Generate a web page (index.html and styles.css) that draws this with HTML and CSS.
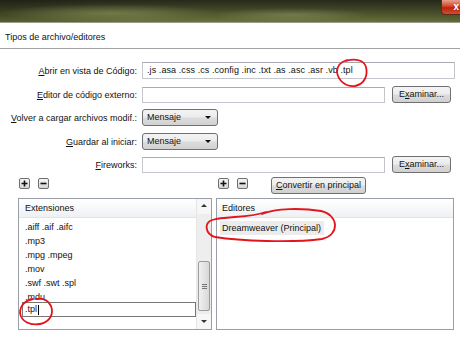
FILE: index.html
```html
<!DOCTYPE html>
<html lang="es">
<head>
    <meta charset="UTF-8">
    <meta name="viewport" content="width=device-width, initial-scale=1.0">
    <title>Tipos de archivo/editores</title>
    <link rel="stylesheet" href="styles.css">
</head>
<body>
    <div class="window">
        <!-- Barra de titulo (Aero) -->
        <div class="titlebar">
            <span class="close-btn">x</span>
        </div>

        <div class="section-title">Tipos de archivo/editores</div>

        <!-- Preferencias -->
        <div class="prefs">
            <label class="prefs-label"><u>A</u>brir en vista de Código:</label>
            <div class="textbox textbox-ext">.js .asa .css .cs .config .inc .txt .as .asc .asr .vb .tpl</div>

            <label class="prefs-label"><u>E</u>ditor de código externo:</label>
            <div class="field-row">
                <div class="textbox"></div>
                <button class="btn">E<u>x</u>aminar...</button>
            </div>

            <label class="prefs-label"><u>V</u>olver a cargar archivos modif.:</label>
            <div class="select">Mensaje<span class="arrow"></span></div>

            <label class="prefs-label"><u>G</u>uardar al iniciar:</label>
            <div class="select">Mensaje<span class="arrow"></span></div>

            <label class="prefs-label"><u>F</u>ireworks:</label>
            <div class="field-row">
                <div class="textbox"></div>
                <button class="btn">E<u>x</u>aminar...</button>
            </div>
        </div>

        <!-- Listas -->
        <div class="panels">
            <div class="panel panel-ext">
                <div class="tools">
                    <span class="mini"><svg width="11" height="11" viewBox="0 0 11 11"><path d="M2.5 5.5h6M5.5 2.5v6" stroke="#111" stroke-width="1.6"/></svg></span>
                    <span class="mini"><svg width="11" height="11" viewBox="0 0 11 11"><path d="M2.5 5.5h6" stroke="#111" stroke-width="1.6"/></svg></span>
                </div>
                <div class="listbox">
                    <div class="list-main">
                        <div class="list-header">Extensiones</div>
                        <div class="list-items">
                            <div class="item">.aiff .aif .aifc</div>
                            <div class="item">.mp3</div>
                            <div class="item">.mpg .mpeg</div>
                            <div class="item">.mov</div>
                            <div class="item">.swf .swt .spl</div>
                            <div class="item">.mdu</div>
                            <div class="item-edit">.tpl<span class="caret"></span></div>
                        </div>
                    </div>
                    <div class="scrollbar">
                        <div class="sb-arrow sb-up"></div>
                        <div class="sb-track">
                            <div class="sb-thumb"><span class="grip"></span></div>
                        </div>
                        <div class="sb-arrow sb-down"></div>
                    </div>
                </div>
            </div>

            <div class="panel panel-editors">
                <div class="tools">
                    <span class="mini"><svg width="11" height="11" viewBox="0 0 11 11"><path d="M2.5 5.5h6M5.5 2.5v6" stroke="#111" stroke-width="1.6"/></svg></span>
                    <span class="mini"><svg width="11" height="11" viewBox="0 0 11 11"><path d="M2.5 5.5h6" stroke="#111" stroke-width="1.6"/></svg></span>
                    <button class="btn btn-principal"><u>C</u>onvertir en principal</button>
                </div>
                <div class="listbox">
                    <div class="list-main">
                        <div class="list-header">Editores</div>
                        <div class="list-items">
                            <span class="item-selected">Dreamweaver (Principal)</span>
                        </div>
                    </div>
                </div>
            </div>
        </div>

        <!-- Marcas rojas a mano -->
        <svg class="marks" width="460" height="337" viewBox="0 0 460 337">
            <path d="M346 61 C355 58, 364 60, 366 67 C368 75, 365 84, 355 86 C345 87, 338 80, 337 72 C337 66, 340 62, 347 60" />
            <path d="M262 214 C276 208, 302 208, 321 211 C339 215, 340 235, 322 239 C292 243, 240 241, 215 237 C205 234, 204 223, 212 220 C226 216, 250 218, 266 212" />
            <path d="M33 299 C26 300, 20 305, 20 313 C21 321, 30 326, 40 324 C50 322, 54 314, 51 306 C48 300, 42 298, 36 299" />
        </svg>
    </div>
</body>
</html>
```

FILE: styles.css
```css
body {
    margin: 0;
    padding: 0;
    background: #fff;
    font-family: 'Liberation Sans', Arial, sans-serif;
    font-size: 9px;
    color: #111;
}

.window {
    position: relative;
    width: 460px;
    height: 337px;
    overflow: hidden;
    background: #fff;
}

/* Barra de titulo */
.titlebar {
    height: 22px;
    border-bottom: 1px solid #9a9d8c;
    display: flex;
    justify-content: flex-end;
    align-items: flex-start;
    background:
        radial-gradient(ellipse 110px 9px at 110px 13px, rgba(160, 170, 110, 0.45), transparent),
        radial-gradient(ellipse 80px 7px at 290px 15px, rgba(175, 180, 140, 0.35), transparent),
        linear-gradient(to right, rgba(0, 0, 0, 0.2), rgba(0, 0, 0, 0) 30%, rgba(0, 0, 0, 0) 70%, rgba(30, 30, 20, 0.1)),
        linear-gradient(to bottom, #262919 0%, #3c4125 35%, #535c2d 70%, #6a743f 100%);
}

.close-btn {
    width: 19px;
    height: 15px;
    box-sizing: border-box;
    border: 1px solid #5b2a1e;
    border-top: none;
    border-right: none;
    border-radius: 0 0 0 4px;
    background: linear-gradient(to bottom, #e8a08a 0%, #d2462c 45%, #b5250f 55%, #d0502a 100%);
    color: #fff;
    font-weight: bold;
    font-size: 10px;
    line-height: 13px;
    text-align: right;
    padding-right: 1px;
}

.section-title {
    height: 25px;
    line-height: 29px;
    padding-left: 5px;
    border-bottom: 1px solid #a3a3a3;
}

/* Formulario */
.prefs {
    display: grid;
    grid-template-columns: 137px 313px;
    grid-auto-rows: 18px;
    column-gap: 5px;
    row-gap: 5.5px;
    margin-top: 13px;
}

.prefs-label {
    text-align: right;
    line-height: 18px;
    white-space: nowrap;
}

.textbox {
    box-sizing: border-box;
    height: 17px;
    border: 1px solid #c3c6cc;
    border-top-color: #a8abb2;
    background: #fff;
    padding-left: 4px;
    line-height: 15px;
    white-space: nowrap;
    overflow: hidden;
}

.textbox-ext {
    letter-spacing: 0.08px;
}

.field-row {
    display: flex;
    gap: 7px;
    width: 309px;
}

.field-row .textbox {
    width: 243px;
    margin-top: 1px;
    height: 16px;
}

.btn {
    box-sizing: border-box;
    width: 59px;
    height: 17px;
    padding: 0;
    border: 1px solid #707070;
    border-radius: 3px;
    background: linear-gradient(to bottom, #f4f4f4 0%, #ececec 48%, #dcdcdc 52%, #d0d0d0 100%);
    font-family: inherit;
    font-size: 9px;
    color: #111;
    line-height: 15px;
}

.select {
    position: relative;
    box-sizing: border-box;
    width: 76px;
    height: 17px;
    border: 1px solid #707070;
    border-radius: 3px;
    background: linear-gradient(to bottom, #f4f4f4 0%, #ebebeb 48%, #dddddd 52%, #d2d2d2 100%);
    padding-left: 4px;
    line-height: 15px;
}

.select .arrow {
    position: absolute;
    right: 6px;
    top: 6px;
    border-left: 3px solid transparent;
    border-right: 3px solid transparent;
    border-top: 3px solid #111;
}

/* Paneles de lista */
.panels {
    display: flex;
    gap: 4px;
    margin-top: 2px;
    padding-left: 18px;
}

.panel-ext {
    width: 194px;
}

.panel-editors {
    width: 238px;
}

.tools {
    height: 18px;
    display: flex;
    align-items: flex-start;
    gap: 8px;
}

.panel-ext .tools {
    padding-left: 1px;
}

.panel-editors .tools {
    padding-left: 2px;
}

.mini {
    box-sizing: border-box;
    width: 11px;
    height: 11px;
    margin-top: 2px;
    border: 1px solid #6f6f6f;
    border-radius: 2px;
    background: linear-gradient(to bottom, #f6f6f6, #d6d6d6);
    display: flex;
}

.mini svg {
    margin: -1px;
}

.btn-principal {
    width: 95px;
    height: 17px;
    margin-left: 15px;
    margin-top: 1px;
}

.listbox {
    box-sizing: border-box;
    height: 132px;
    margin-top: 4px;
    border: 1px solid #9a9ea6;
    display: flex;
    background: #fff;
}

.list-main {
    flex: 1;
    overflow: hidden;
}

.list-header {
    height: 18px;
    line-height: 19px;
    padding-left: 6px;
    border-bottom: 1px solid #e2e4e8;
    background: linear-gradient(to bottom, #ffffff 0%, #f7f8fa 50%, #eef0f3 100%);
}

.panel-editors .list-header {
    padding-left: 5px;
}

.list-items {
    padding-top: 2px;
}

.item {
    height: 14px;
    line-height: 14px;
    padding-left: 6px;
}

.item-edit {
    box-sizing: border-box;
    height: 15px;
    margin: -2px 0 0 3px;
    width: 174px;
    border: 1px solid #777;
    background: #fff;
    padding-left: 2px;
    line-height: 13px;
    display: flex;
    align-items: center;
}

.caret {
    width: 1px;
    height: 10px;
    background: #000;
    margin-left: 1px;
}

.item-selected {
    display: inline-block;
    margin: 1px 0 0 3px;
    padding: 0 3px 0 2px;
    height: 14px;
    line-height: 14px;
    background: #ececec;
}

/* Barra de desplazamiento */
.scrollbar {
    width: 14px;
    display: flex;
    flex-direction: column;
    background: #f1f1f1;
    border-left: 1px solid #e6e6e6;
}

.sb-arrow {
    height: 15px;
    position: relative;
    background: #f7f7f7;
}

.sb-arrow::after {
    content: '';
    position: absolute;
    left: 4px;
    border-left: 3px solid transparent;
    border-right: 3px solid transparent;
}

.sb-up::after {
    top: 5px;
    border-bottom: 3px solid #333;
}

.sb-down::after {
    top: 6px;
    border-top: 3px solid #333;
}

.sb-track {
    flex: 1;
    background: #eeeeee;
}

.sb-thumb {
    box-sizing: border-box;
    height: 50px;
    margin: 47px 1px 0 1px;
    border: 1px solid #9b9b9b;
    border-radius: 2px;
    background: linear-gradient(to right, #f1f1f1, #d7d7d7);
    display: flex;
    justify-content: center;
    align-items: center;
}

.grip {
    width: 5px;
    height: 5px;
    background: repeating-linear-gradient(to bottom, #777 0, #777 1px, transparent 1px, transparent 2px);
}

/* Marcas rojas */
.marks {
    position: absolute;
    top: 0;
    left: 0;
    pointer-events: none;
}

.marks path {
    fill: none;
    stroke: #e3141c;
    stroke-width: 1.8;
    stroke-linecap: round;
}
```
